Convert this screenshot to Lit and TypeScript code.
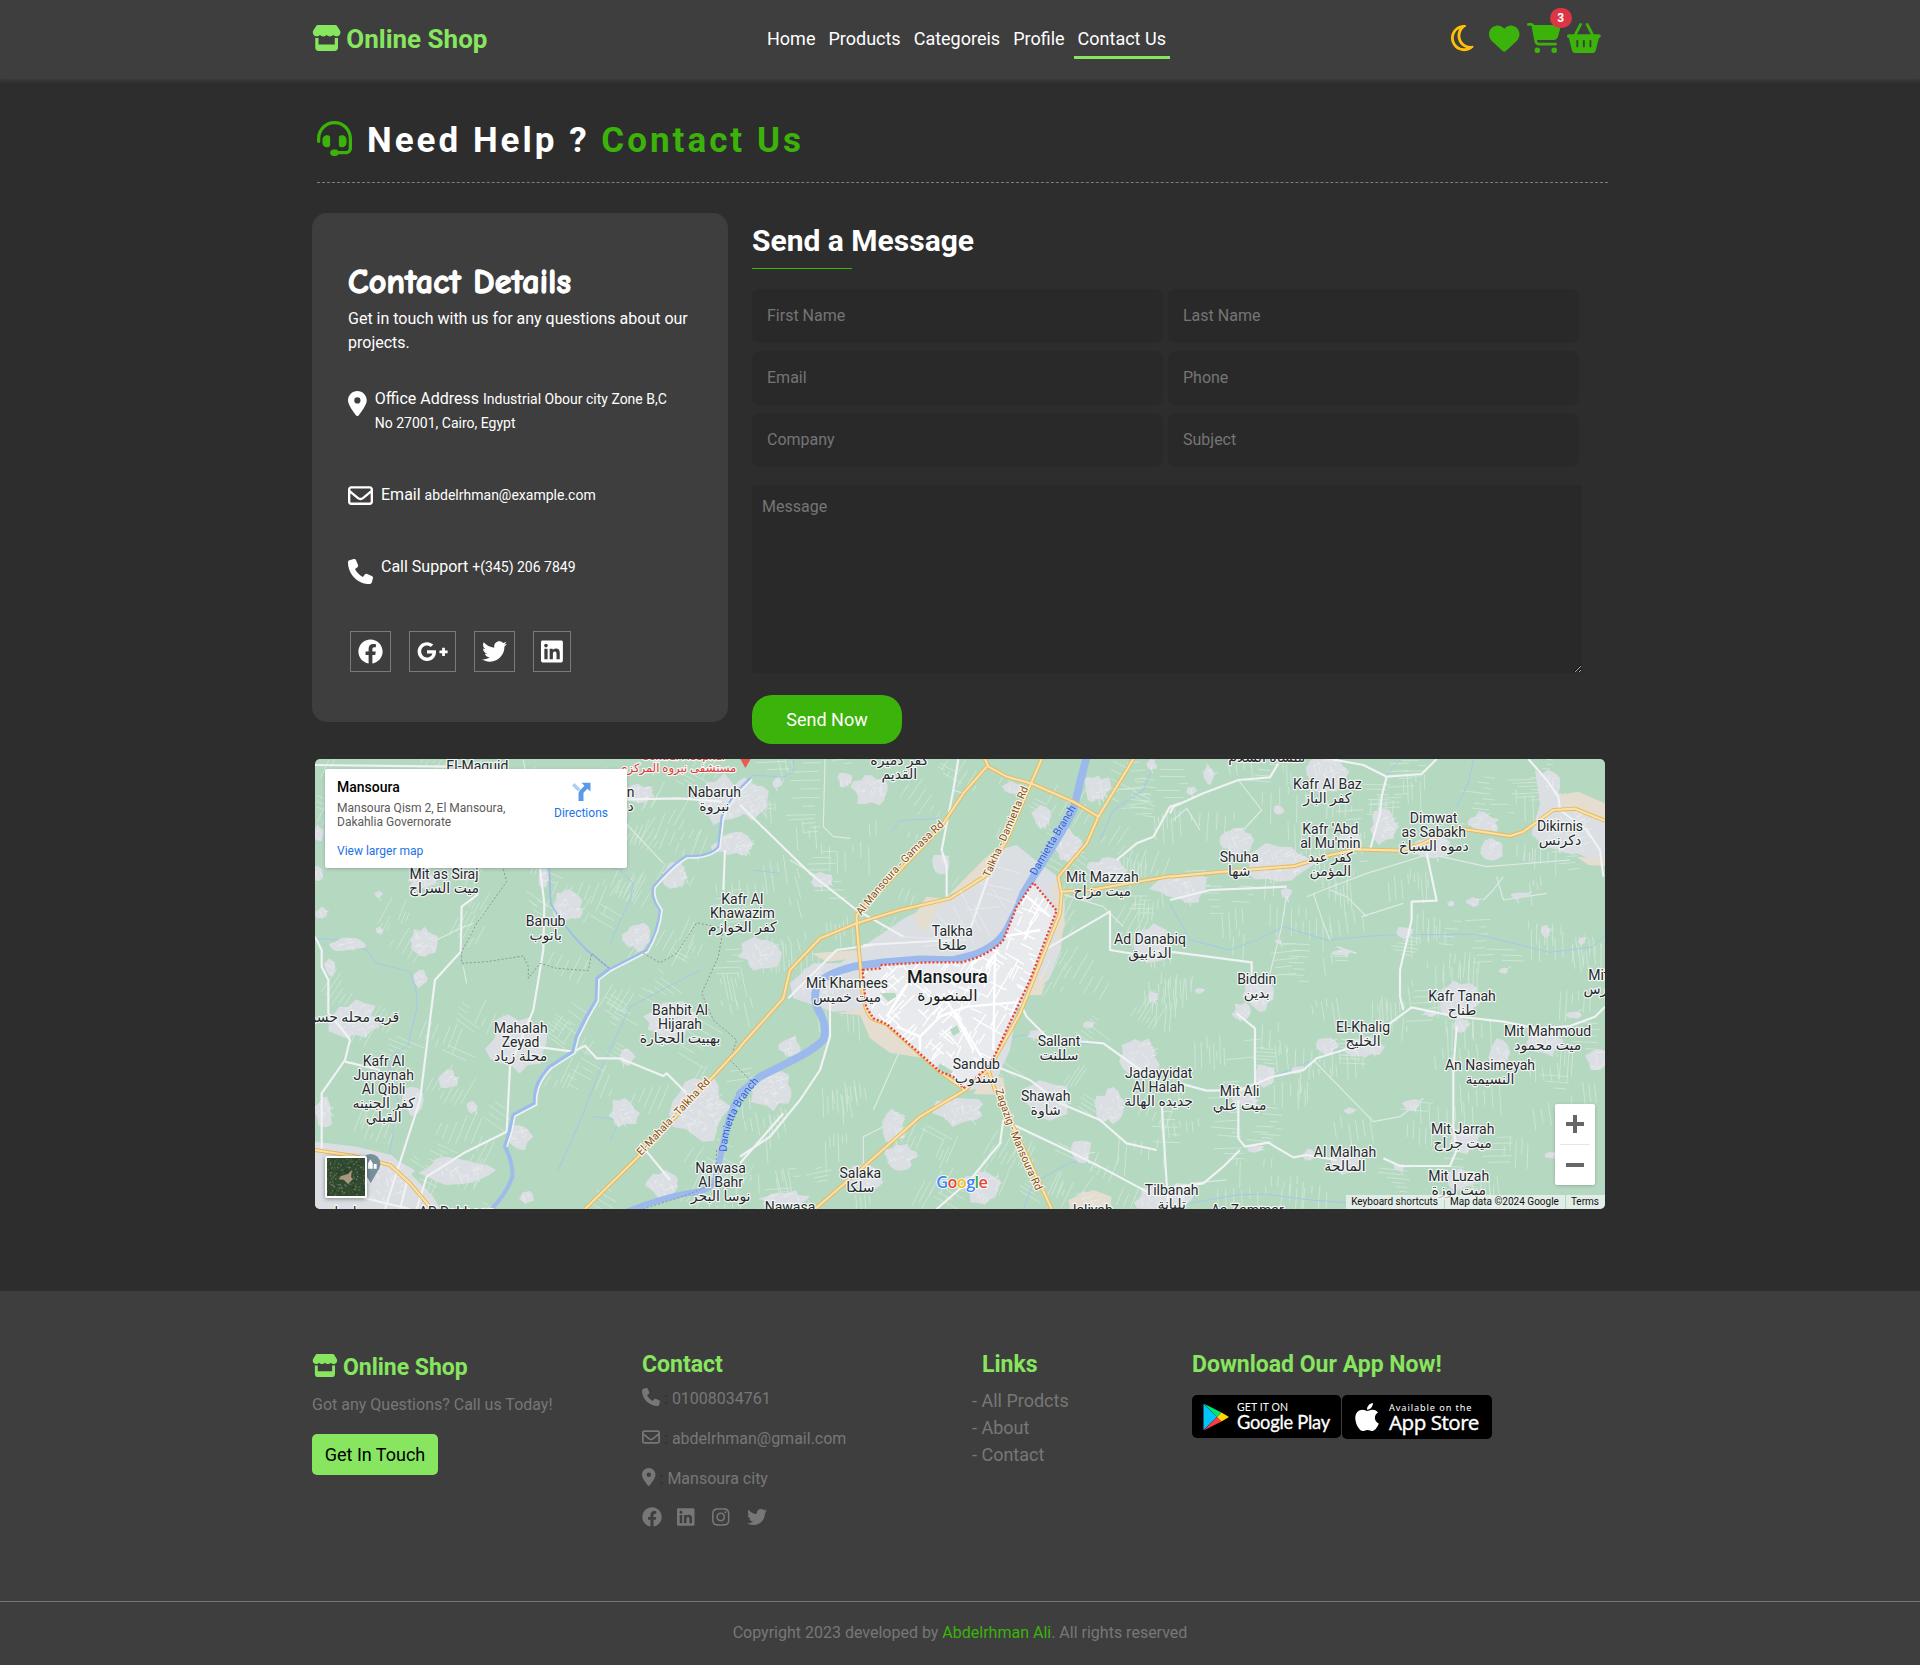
import { LitElement, html, svg, css } from "lit";
import { customElement, property } from "lit/decorators.js";

type Glyph = [number, string];

// Icon outlines on a 512-high grid: [grid width, path].
const ICONS: Record<string, Glyph> = {
  store: [576, "M547.6 103.8L490.3 13.1C485.2 5 476.1 0 466.4 0H109.6C99.9 0 90.8 5 85.7 13.1L28.3 103.8c-29.6 46.8-3.4 111.9 51.9 119.4c4 .5 8.1 .8 12.1 .8c26.1 0 49.3-11.4 65.2-29c15.9 17.6 39.1 29 65.2 29c26.1 0 49.3-11.4 65.2-29c15.9 17.6 39.1 29 65.2 29c26.2 0 49.3-11.4 65.2-29c16 17.6 39.1 29 65.2 29c4.1 0 8.1-.3 12.1-.8c55.5-7.4 81.8-72.5 52.1-119.4zM499.7 254.9l-.1 0c-5.3 .7-10.7 1.1-16.2 1.1c-12.4 0-24.3-1.9-35.4-5.3V384H128V250.6c-11.2 3.5-23.2 5.4-35.6 5.4c-5.5 0-11-.4-16.3-1.1l-.1 0c-4.1-.6-8.1-1.3-12-2.3V384v64c0 35.3 28.7 64 64 64H448c35.3 0 64-28.7 64-64V384 252.6c-4 1-8 1.8-12.3 2.3z"],
  headset: [512, "M256 48C141.1 48 48 141.1 48 256v40c0 13.3-10.7 24-24 24s-24-10.7-24-24V256C0 114.6 114.6 0 256 0S512 114.6 512 256V400.1c0 48.6-39.4 88-88.1 88L313.6 488c-8.3 14.3-23.8 24-41.6 24H240c-26.5 0-48-21.5-48-48s21.5-48 48-48h32c17.8 0 33.3 9.7 41.6 24l110.4 .1c22.1 0 40-17.9 40-40V256c0-114.9-93.1-208-208-208zM144 208h16c17.7 0 32 14.3 32 32V352c0 17.7-14.3 32-32 32H144c-35.3 0-64-28.7-64-64V272c0-35.3 28.7-64 64-64zm224 0c35.3 0 64 28.7 64 64v48c0 35.3-28.7 64-64 64H352c-17.7 0-32-14.3-32-32V240c0-17.7 14.3-32 32-32h16z"],
  moon: [384, "M144.7 98.7c-21 34.1-33.1 74.3-33.1 117.3c0 98 62.8 181.4 150.4 211.7c-12.4 2.8-25.3 4.3-38.6 4.3C126.6 432 48 353.3 48 256c0-68.9 39.4-128.4 96.8-157.3zm62.1-66C91.1 41.2 0 137.9 0 256C0 379.7 100 480 223.5 480c47.8 0 92-15 128.4-40.6c1.9-1.3 3.7-2.7 5.5-4c4.8-3.6 9.4-7.4 13.9-11.4c2.7-2.4 5.3-4.8 7.9-7.3c5-4.9 6.3-12.5 3.1-18.7s-10.1-9.7-17-8.5c-3.7 .6-7.4 1.2-11.1 1.6c-5 .5-10.1 .9-15.3 1c-1.2 0-2.5 0-3.7 0c-.1 0-.2 0-.3 0c-96.8-.2-175.2-78.9-175.2-176c0-54.8 24.9-103.7 64.1-136c1-.9 2.1-1.7 3.2-2.6c4-3.2 8.2-6.2 12.5-9c3.1-2 6.3-4 9.6-5.8c6.1-3.5 9.2-10.5 7.7-17.3s-7.3-11.9-14.3-12.5c-3.6-.3-7.1-.5-10.7-.6c-2.7-.1-5.5-.1-8.2-.1c-3.3 0-6.5 .1-9.8 .2c-2.3 .1-4.6 .2-6.9 .4z"],
  heart: [512, "M47.6 300.4L228.3 469.1c7.5 7 17.4 10.9 27.7 10.9s20.2-3.9 27.7-10.9L464.4 300.4c30.4-28.3 47.6-68 47.6-109.5v-5.8c0-69.9-50.5-129.5-119.4-141C347 36.5 300.6 51.4 268 84L256 96 244 84c-32.6-32.6-79-47.5-124.6-39.9C50.5 55.6 0 115.2 0 185.1v5.8c0 41.5 17.2 81.2 47.6 109.5z"],
  cart: [576, "M0 24C0 10.7 10.7 0 24 0H69.5c22 0 41.5 12.8 50.6 32h411c26.3 0 45.5 25 38.6 50.4l-41 152.3c-8.5 31.4-37 53.3-69.5 53.3H170.7l5.4 28.5c2.2 11.3 12.1 19.5 23.6 19.5H488c13.3 0 24 10.7 24 24s-10.7 24-24 24H199.7c-34.6 0-64.3-24.6-70.7-58.5L77.4 54.5c-.7-3.8-4-6.5-7.9-6.5H24C10.7 48 0 37.3 0 24zM128 464a48 48 0 1 1 96 0 48 48 0 1 1 -96 0zm336-48a48 48 0 1 1 0 96 48 48 0 1 1 0-96z"],
  basket: [576, "M253.3 35.1c6.1-11.8 1.5-26.3-10.2-32.4s-26.3-1.5-32.4 10.2L117.6 192H32c-17.7 0-32 14.3-32 32s14.3 32 32 32L83.9 463.5C91 492 116.6 512 146 512H430c29.4 0 55-20 62.1-48.5L544 256c17.7 0 32-14.3 32-32s-14.3-32-32-32H458.4L365.3 12.9C359.2 1.2 344.7-3.4 332.9 2.7s-16.3 20.6-10.2 32.4L404.3 192H171.7L253.3 35.1zM192 304v96c0 8.8-7.2 16-16 16s-16-7.2-16-16V304c0-8.8 7.2-16 16-16s16 7.2 16 16zm96-16c8.8 0 16 7.2 16 16v96c0 8.8-7.2 16-16 16s-16-7.2-16-16V304c0-8.8 7.2-16 16-16zm128 16v96c0 8.8-7.2 16-16 16s-16-7.2-16-16V304c0-8.8 7.2-16 16-16s16 7.2 16 16z"],
  pin: [384, "M215.7 499.2C267 435 384 279.4 384 192C384 86 298 0 192 0S0 86 0 192c0 87.4 117 243 168.3 307.2c12.3 15.3 35.1 15.3 47.4 0zM192 128a64 64 0 1 1 0 128 64 64 0 1 1 0-128z"],
  mail: [512, "M64 112c-8.8 0-16 7.2-16 16v22.1L220.5 291.7c20.7 17 50.4 17 71.1 0L464 150.1V128c0-8.8-7.2-16-16-16H64zM48 212.2V384c0 8.8 7.2 16 16 16H448c8.8 0 16-7.2 16-16V212.2L322 328.8c-38.4 31.5-93.7 31.5-132 0L48 212.2zM0 128C0 92.7 28.7 64 64 64H448c35.3 0 64 28.7 64 64V384c0 35.3-28.7 64-64 64H64c-35.3 0-64-28.7-64-64V128z"],
  phone: [512, "M164.9 24.6c-7.7-18.6-28-28.5-47.4-23.2l-88 24C12.1 30.2 0 46 0 64C0 311.4 200.6 512 448 512c18 0 33.8-12.1 38.6-29.5l24-88c5.3-19.4-4.6-39.7-23.2-47.4l-96-40c-16.3-6.8-35.2-2.1-46.3 11.6L304.7 368C234.3 334.7 177.3 277.7 144 207.3L193.3 167c13.7-11.2 18.4-30 11.6-46.3l-40-96z"],
  facebook: [512, "M504 256C504 119 393 8 256 8S8 119 8 256c0 123.78 90.69 226.38 209.25 245V327.69h-63V256h63v-54.64c0-62.15 37-96.48 93.67-96.48 27.14 0 55.52 4.84 55.52 4.84v61h-31.28c-30.8 0-40.41 19.12-40.41 38.73V256h68.78l-11 71.69h-57.78V501C413.31 482.38 504 379.78 504 256z"],
  gplus: [640, "M386.061 228.496c1.834 9.692 3.143 19.384 3.143 31.956C389.204 370.205 315.599 448 204.8 448c-106.084 0-192-85.915-192-192s85.916-192 192-192c51.864 0 95.083 18.859 128.611 50.292l-52.126 50.03c-14.145-13.621-39.028-29.599-76.485-29.599-65.484 0-118.92 54.221-118.92 121.277 0 67.056 53.436 121.277 118.92 121.277 75.961 0 104.513-54.745 108.965-82.773H204.8v-66.009h181.261zm185.406 6.437V179.2h-56.001v55.733h-55.733v56.001h55.733v55.733h56.001v-55.733H627.2v-56.001h-55.733z"],
  twitter: [512, "M459.37 151.716c.325 4.548.325 9.097.325 13.645 0 138.72-105.583 298.558-298.558 298.558-59.452 0-114.68-17.219-161.137-47.106 8.447.974 16.568 1.299 25.34 1.299 49.055 0 94.213-16.568 130.274-44.832-46.132-.975-84.792-31.188-98.112-72.772 6.498.974 12.995 1.624 19.818 1.624 9.421 0 18.843-1.3 27.614-3.573-48.081-9.747-84.143-51.98-84.143-102.985v-1.299c13.969 7.797 30.214 12.67 47.431 13.319-28.264-18.843-46.781-51.005-46.781-87.391 0-19.492 5.197-37.36 14.294-52.954 51.655 63.675 129.3 105.258 216.365 109.807-1.624-7.797-2.599-15.918-2.599-24.04 0-57.828 46.782-104.934 104.934-104.934 30.213 0 57.502 12.67 76.67 33.137 23.715-4.548 46.456-13.32 66.599-25.34-7.798 24.366-24.366 44.833-46.132 57.827 21.117-2.273 41.584-8.122 60.426-16.243-14.292 20.791-32.161 39.308-52.628 54.253z"],
  linkedin: [448, "M416 32H31.9C14.3 32 0 46.5 0 64.3v383.4C0 465.5 14.3 480 31.9 480H416c17.6 0 32-14.5 32-32.3V64.3c0-17.8-14.4-32.3-32-32.3zM135.4 416H69V202.2h66.5V416zm-33.2-243c-21.3 0-38.5-17.3-38.5-38.5S80.9 96 102.2 96c21.2 0 38.5 17.3 38.5 38.5 0 21.3-17.2 38.5-38.5 38.5zm282.1 243h-66.4V312c0-24.8-.5-56.7-34.5-56.7-34.6 0-39.9 27-39.9 54.9V416h-66.4V202.2h63.7v29.2h.9c8.9-16.8 30.6-34.5 62.9-34.5 67.2 0 79.7 44.3 79.7 101.9V416z"],
  instagram: [448, "M224.1 141c-63.6 0-114.9 51.3-114.9 114.9s51.3 114.9 114.9 114.9S339 319.5 339 255.9 287.7 141 224.1 141zm0 189.6c-41.1 0-74.7-33.5-74.7-74.7s33.5-74.7 74.7-74.7 74.7 33.5 74.7 74.7-33.6 74.7-74.7 74.7zm146.4-194.3c0 14.9-12 26.8-26.8 26.8-14.9 0-26.8-12-26.8-26.8s12-26.8 26.8-26.8 26.8 12 26.8 26.8zm76.1 27.2c-1.7-35.9-9.9-67.7-36.2-93.9-26.2-26.2-58-34.4-93.9-36.2-37-2.1-147.9-2.1-184.9 0-35.8 1.7-67.6 9.9-93.9 36.1s-34.4 58-36.2 93.9c-2.1 37-2.1 147.9 0 184.9 1.7 35.9 9.9 67.7 36.2 93.9s58 34.4 93.9 36.2c37 2.1 147.9 2.1 184.9 0 35.9-1.7 67.7-9.9 93.9-36.2 26.2-26.2 34.4-58 36.2-93.9 2.1-37 2.1-147.8 0-184.8zM398.8 388c-7.8 19.6-22.9 34.7-42.6 42.6-29.5 11.7-99.5 9-132.1 9s-102.7 2.6-132.1-9c-19.6-7.8-34.7-22.9-42.6-42.6-11.7-29.5-9-99.5-9-132.1s-2.6-102.7 9-132.1c7.8-19.6 22.9-34.7 42.6-42.6 29.5-11.7 99.5-9 132.1-9s102.7-2.6 132.1 9c19.6 7.8 34.7 22.9 42.6 42.6 11.7 29.5 9 99.5 9 132.1s2.7 102.7-9 132.1z"],
  apple: [384, "M318.7 268.7c-.2-36.7 16.4-64.4 50-84.8-18.8-26.9-47.2-41.7-84.7-44.6-35.5-2.8-74.3 20.7-88.5 20.7-15 0-49.4-19.7-76.4-19.7C63.3 141.2 4 184.8 4 273.5q0 39.3 14.4 81.2c12.8 36.7 59 126.7 107.2 125.2 25.2-.6 43-17.9 75.8-17.9 31.8 0 48.3 17.9 76.4 17.9 48.6-.7 90.4-82.5 102.6-119.3-65.2-30.7-61.7-90-61.7-91.9zm-56.6-164.2c27.3-32.4 24.8-61.9 24-72.5-24.1 1.4-52 16.4-67.9 34.9-17.5 19.8-27.8 44.3-25.6 71.9 26.1 2 49.9-11.4 69.5-34.3z"],
};

@customElement("fa-icon")
export class FaIcon extends LitElement {
  @property() name = "store";
  @property({ type: Number }) size = 25;

  static styles = css`
    :host { display: inline-block; flex: none; }
    .glyph { display: block; fill: currentColor; }
  `;

  render() {
    const [w, d] = ICONS[this.name];
    return html`<svg class="glyph" viewBox="0 0 ${w} 512" width=${(w / 512) * this.size} height=${this.size}><path d=${d} /></svg>`;
  }
}

/* ---------- city map ---------- */

// Map units are a third of a CSS pixel. The map is surveyed in three sheets.
const SHEETS = [0, 1290, 2580];
type Place = [number, number, string[], string?];

const PLACES: Place[][] = [
  [
    [502, 62, ["El-Maquid"]],
    [962, 142, ["n", "د"]],
    [1213, 142, ["Nabaruh", "نبروة"]],
    [402, 388, ["Mit as Siraj", "ميت السراج"]],
    [707, 529, ["Banub", "بانوب"]],
    [1297, 461, ["Kafr Al", "Khawazim", "كفر الخوازم"]],
    [632, 850, ["Mahalah", "Zeyad", "محلة زياد"]],
    [221, 948, ["Kafr Al", "Junaynah", "Al Qibli", "كفر الجنينه", "القبلي"]],
    [128, 816, ["قريه محله حسن"]],
    [1110, 795, ["Bahbit Al", "Hijarah", "بهبيت الحجارة"]],
    [1232, 1270, ["Nawasa", "Al Bahr", "نوسا البحر"]],
    [1120, 30, ["Central Hospital"], "clinic"],
    [1102, 66, ["مستشفى نبروه المركزي"], "clinic"],
    [440, 1402, ["AR Rahbeen"]],
    [115, 1402, ["سامول"]],
  ],
  [
    [478, 45, ["كفر دميرة", "القديم"]],
    [637, 559, ["Talkha", "طلخا"]],
    [622, 700, ["Mansoura"], "city"],
    [622, 753, ["المنصورة"], "city-ar"],
    [321, 714, ["Mit Khamees", "ميت خميس"]],
    [1087, 396, ["Mit Mazzah", "ميت مزاح"]],
    [1230, 583, ["Ad Danabiq", "الدنابيق"]],
    [957, 888, ["Sallant", "سللنت"]],
    [1256, 985, ["Jadayyidat", "Al Halah", "جديده الهالة"]],
    [709, 957, ["Sandub", "سندوب"]],
    [917, 1053, ["Shawah", "شاوة"]],
    [361, 1285, ["Salaka", "سلكا"]],
    [150, 1385, ["Nawasa"]],
    [1052, 1396, ["Jaliyah"]],
    [1295, 1335, ["Tilbanah", "تلبانة"]],
  ],
  [
    [290, 35, ["منشأة السلام"]],
    [472, 118, ["Kafr Al Baz", "كفر الباز"]],
    [481, 252, ["Kafr 'Abd", "al Mu'min", "كفر عبد", "المؤمن"]],
    [791, 219, ["Dimwat", "as Sabakh", "دموه السباخ"]],
    [1170, 243, ["Dikirnis", "دكرنس"]],
    [208, 336, ["Shuha", "شها"]],
    [260, 703, ["Biddin", "بدين"]],
    [876, 753, ["Kafr Tanah", "طناح"]],
    [579, 847, ["El-Khalig", "الخليج"]],
    [1133, 858, ["Mit Mahmoud", "ميت محمود"]],
    [960, 960, ["An Nasimeyah", "النسيمية"]],
    [209, 1039, ["Mit Ali", "ميت علي"]],
    [878, 1152, ["Mit Jarrah", "ميت جراح"]],
    [525, 1221, ["Al Malhah", "المالحة"]],
    [866, 1294, ["Mit Luzah", "ميت لوزة"]],
    [232, 1394, ["As Zammar"]],
    [1336, 690, ["Mit Faris", "ميت فارس"]],
  ],
];

// Village footprints: centre x, centre y, half width, half height.
const VILLAGES: number[][][] = [
  [[980, 130, 60, 30], [1235, 150, 85, 75], [1270, 280, 70, 45], [1095, 375, 45, 40], [770, 470, 50, 50], [980, 560, 45, 45],
   [340, 575, 50, 50], [330, 685, 28, 28], [207, 432, 14, 10], [207, 540, 12, 14], [130, 810, 85, 60], [620, 880, 95, 90], [1080, 810, 85, 60],
   [950, 920, 28, 28], [415, 990, 30, 32], [485, 1070, 18, 22], [940, 1090, 50, 45], [1170, 1070, 90, 110], [630, 1160, 38, 45], [110, 585, 55, 22],
   [440, 1260, 110, 45], [180, 1290, 170, 95], [1060, 1300, 60, 40], [25, 250, 22, 25], [40, 1090, 30, 60], [25, 370, 18, 25], [340, 395, 50, 24], [310, 1050, 40, 50], [700, 385, 20, 30], [650, 1340, 25, 22], [60, 650, 20, 30], [35, 490, 20, 20]],
  [[30, 150, 60, 70], [390, 120, 60, 50], [315, 90, 24, 26], [10, 290, 28, 35], [600, 340, 30, 35], [245, 390, 35, 28], [905, 200, 30, 35], [1070, 115, 45, 45],
   [985, 290, 45, 55], [60, 610, 65, 55], [1100, 360, 60, 45], [1235, 580, 60, 60], [820, 115, 35, 20], [480, 1220, 50, 40], [460, 1130, 40, 60], [660, 1080, 80, 50],
   [920, 1050, 80, 60], [1115, 1070, 50, 60], [1200, 920, 60, 65], [1240, 740, 18, 18], [1045, 825, 20, 12], [1020, 1200, 38, 40], [730, 1310, 60, 55], [370, 1280, 60, 45],
   [150, 890, 38, 35], [95, 1020, 70, 65], [1240, 1350, 60, 45], [130, 1350, 80, 30], [1050, 1350, 60, 25], [1235, 45, 18, 18], [240, 700, 90, 60], [112, 98, 18, 18], [890, 855, 30, 15]],
  [[470, 65, 70, 70], [115, 75, 18, 35], [65, 122, 18, 14], [325, 180, 18, 16], [200, 270, 50, 50], [320, 340, 110, 60], [640, 230, 45, 55], [40, 410, 100, 42], [540, 255, 35, 40],
   [940, 220, 50, 35], [970, 300, 38, 35], [790, 290, 60, 40], [1140, 110, 40, 55], [1200, 240, 110, 75], [1050, 436, 40, 10], [910, 456, 22, 16], [842, 461, 12, 10],
   [705, 548, 28, 20], [1125, 545, 16, 20], [1235, 572, 12, 14], [325, 575, 10, 10], [515, 608, 30, 10], [88, 722, 16, 10], [1000, 662, 14, 10], [265, 730, 50, 55],
   [215, 785, 30, 30], [870, 750, 70, 60], [875, 825, 25, 25], [1210, 795, 25, 12], [1120, 870, 60, 55], [985, 910, 35, 45], [1280, 930, 35, 45], [470, 890, 35, 28],
   [580, 890, 60, 35], [285, 975, 35, 40], [225, 1040, 45, 35], [540, 1082, 18, 10], [725, 1065, 32, 20], [885, 1170, 50, 40], [415, 1215, 20, 18], [530, 1245, 55, 30],
   [255, 1195, 30, 12], [690, 1252, 18, 12], [870, 1290, 45, 35], [30, 1330, 45, 40], [1140, 1215, 20, 12], [380, 960, 25, 12], [350, 430, 18, 16], [60, 450, 30, 12], [780, 790, 20, 12]],
];

const CITY_FABRIC: string[][] = [
  ["M15 1175L140 1190 245 1215 300 1270 370 1340 390 1377H15Z"],
  ["M300 640L390 575 500 500 620 450 740 378 775 300 830 285 885 330 960 385 975 470 962 600 925 690 870 735 830 780 810 900 760 1010 690 1020 560 925 450 905 390 850 365 780 280 785 160 745 150 700 220 640Z"],
  ["M1095 60L1160 110 1170 140 1225 150 1305 190V345L1220 310 1120 290 1085 250 1110 160Z"],
];
const SAND: string[][] = [
  [],
  ["M290 790L370 775 380 800 440 822 555 925 450 908 390 865 360 795Z", "M620 440L735 325 790 285 740 378Z", "M520 500L560 440 625 448 590 480 550 550Z", "M745 965L790 985 797 1035 700 1032Z",
   "M935 395L965 425 975 520 955 600ZM880 700L925 650 905 735 860 735Z", "M985 1350L1060 1320 1115 1340 1110 1377H990Z", "M215 610L350 600 345 625 260 635Z"],
  ["M1165 135L1225 125 1305 160V212L1215 176 1175 165Z", "M1220 320L1305 325V348L1255 345Z"],
];
const STREAMS: string[][] = [
  ["M45 140V310M15 565L90 570 170 600 200 640 300 665Q325 720 320 780 300 850 295 885L235 925 265 1060 235 1230 265 1377", "M850 340L930 360 970 400 960 450 900 580", "M1170 660L960 770 900 900 870 960 820 1090 745 1260", "M900 1170L930 1110 850 1100"],
  ["M0 110L40 75 130 82 160 65V27", "M450 250L480 212 600 205", "M650 800L540 690", "M1245 40L1210 120 1120 180 1080 270", "M800 865L850 855 890 860M1020 880L1090 882 1150 920", "M850 1377L880 1300 950 1260 990 1238 1040 1235", "M120 370L40 360"],
  ["M0 460L60 570 180 600 260 570 340 530 470 570 640 555 920 553 1140 607 1270 590 1305 555", "M30 998L100 1020 210 1022 310 980 430 930 520 895 650 825 725 775", "M0 1370L200 1335 280 1332 420 1350 620 1365", "M650 75L690 30M910 30L895 100 860 170"],
];
const WHITE_ROADS: string[][] = [
  ["M15 560L35 600V650L55 690V790L90 830 120 870 105 930 35 1030V1200", "M505 432L455 470 452 605 375 690 345 930 330 1050 225 1377", "M690 355L703 460 700 600 670 780 600 950 590 1145 460 1210 350 1280 320 1377",
   "M600 880L790 905 825 887 860 925 930 925 1060 978 1070 970 1130 1030", "M990 1180L1080 1290", "M105 935L210 960", "M15 45L420 50", "M950 148L1110 145 1235 155", "M1245 300L1240 420", "M60 1320L300 1377", "M290 1300L270 1377", "M1290 1240L1420 1090"],
  ["M0 165L210 370 350 480 490 560", "M655 27L640 120 605 300 620 350V440", "M370 585L640 570", "M145 745L290 600 400 585", "M745 380L690 540M1320 160L1290 170 1240 260 1190 280 1130 330", "M905 605L1110 485 1110 600 1230 620",
   "M830 740L860 800 920 860 970 870 1090 880 1160 930 1270 1010 1330 1020", "M770 950L870 990 960 1060 1080 1110 1160 1180 1250 1200", "M790 1110L780 1180 690 1290 590 1377", "M790 1110L980 1200 1080 1250 1230 1330", "M270 750L270 860 240 960 180 1050 90 1160 0 1220", "M1265 1060L1285 1377"],
  ["M0 190L10 170 100 130 205 90 300 82 325 40", "M480 27L580 45 650 80 755 72 800 27", "M650 80L635 140 630 190 600 300", "M1075 27L1130 90 1165 140 1170 180 1250 240 1290 300 1300 380", "M770 310L800 452 725 455 725 510 690 660 690 740 700 780",
   "M0 605L245 637 245 680", "M200 790L255 835V1010", "M640 835L725 772 850 798 1000 815 1100 835 1200 828 1275 800 1305 770", "M30 1000L110 1022 210 1020 310 980 400 960 440 925 520 900 600 870", "M860 830L850 960V1130L860 1200 840 1248 690 1248 640 1225", "M205 1050V1165L225 1190 295 1178 370 1222 410 1215 500 1230", "M210 1200L160 1250 100 1300 30 1310", "M0 450L120 420 350 410"],
];
const MINOR_ROADS: string[][] = [
  ["M460 650L470 700M640 30L665 150M735 60L740 355M910 180L1060 340", "M360 580L440 540 490 520"],
  ["M255 27L250 230 280 260 330 265M150 330L250 390M640 120L670 130M480 900L400 1080M370 1240V1160L490 1100", "M960 430L1090 470 1150 530"],
  ["M600 300L770 310 950 350 1200 330M410 440L460 420 590 370 770 315", "M205 90L275 180 220 240M10 210L50 175 90 240", "M350 430L335 530 300 670M430 430L460 520 480 570M480 420L530 440 590 500", "M430 930L610 1115 690 1100 760 1045M1000 380L970 420 940 450M980 380L1000 450 1130 430M500 590L560 610M60 1300L170 1290", "M575 500L700 460"],
];
const HIGHWAYS: string[][] = [
  ["M15 1200L130 1218 240 1245 300 1300 365 1377", "M825 1377L990 1215 1190 1000 1292 890"],
  ["M0 890L130 745 150 660 240 565 350 520 480 480 630 445 740 375 800 270 873 100 905 27", "M735 27L745 50 800 80 873 100 1000 155 1075 200", "M350 520V495L600 235 670 130 740 50", "M1180 27L1075 200 1040 280 955 380 965 430 960 490 900 640 840 790 790 880 745 960 675 1020 540 1100 360 1260 225 1377",
   "M350 520L368 730Q375 790 400 808L440 822 600 965 675 1020", "M745 960L765 1020 820 1130 935 1377", "M965 425L1050 420 1292 378"],
  ["M0 380L160 365 375 348 480 315 560 298 690 302 760 280 850 235 900 240 1020 258 1060 245 1150 180 1215 176 1305 212"],
];
const BORDERS: string[][] = [
  ["M580 358L590 395 500 520 455 605 455 640 530 635 640 618 655 650 655 685 690 640 740 655 835 662 845 610 900 657", "M1000 610L1050 638 1100 610 1160 518 1240 535 1225 620 1175 730 1210 810 1280 870 1260 930 1330 1000", "M1220 1200L1215 1300 1130 1335 1000 1377"],
  [], [],
];

function seeded(seed: number) {
  let s = seed;
  return () => {
    s = (s * 1664525 + 1013904223) >>> 0;
    return s / 4294967296;
  };
}

// Irrigation strips: bundles of short parallel strokes.
function fieldLines(): string {
  const r = seeded(77);
  let d = "";
  for (let i = 0; i < 360; i++) {
    const cx = 15 + r() * 3870;
    const cy = 27 + r() * 1350;
    const east = cx > 2500;
    const base = east ? 88 : cx > 1290 && cx < 1700 ? 82 : -62;
    const a = ((base + (r() - 0.5) * 14 + (r() > 0.72 ? 92 : 0)) * Math.PI) / 180;
    const n = 2 + Math.floor(r() * 6);
    const gap = 10 + r() * 16;
    for (let k = 0; k < n; k++) {
      const len = 18 + r() * 75;
      const shift = (r() - 0.5) * 30;
      const x = cx - Math.sin(a) * gap * k + Math.cos(a) * shift;
      const y = cy + Math.cos(a) * gap * k + Math.sin(a) * shift;
      d += `M${x.toFixed(0)} ${y.toFixed(0)}l${(Math.cos(a) * len).toFixed(0)} ${(Math.sin(a) * len).toFixed(0)}`;
    }
  }
  return d;
}

function blob([cx, cy, rx, ry]: number[], seed: number): string {
  const r = seeded(seed * 97 + 5);
  const n = rx > 40 ? 17 : 11;
  let d = "";
  for (let i = 0; i < n; i++) {
    const a = (i / n) * Math.PI * 2;
    const k = 0.66 + r() * 0.42;
    d += `${i ? "L" : "M"}${(cx + Math.cos(a) * rx * k).toFixed(0)} ${(cy + Math.sin(a) * ry * k).toFixed(0)}`;
  }
  return d + "Z";
}

function lanes([cx, cy, rx, ry]: number[], seed: number): string {
  const r = seeded(seed * 31 + 9);
  const count = Math.round((rx * ry) / 170);
  let d = "";
  for (let i = 0; i < count; i++) {
    const t = r() * Math.PI * 2;
    const q = Math.sqrt(r()) * 0.7;
    const a = (r() > 0.5 ? 1.2 : -0.35) + (r() - 0.5) * 0.5;
    const len = 8 + r() * 16;
    d += `M${(cx + Math.cos(t) * rx * q).toFixed(0)} ${(cy + Math.sin(t) * ry * q).toFixed(0)}l${(Math.cos(a) * len).toFixed(0)} ${(Math.sin(a) * len).toFixed(0)}`;
  }
  return d;
}

function speckles(): { x: number; y: number; c: string }[] {
  const r = seeded(12);
  const tones = ["#1f3a26", "#47603f", "#5d6f55", "#2c4d30", "#738067"];
  return Array.from({ length: 230 }, () => ({ x: r() * 37, y: r() * 37, c: tones[Math.floor(r() * 5)] }));
}

@customElement("city-map")
export class CityMap extends LitElement {
  static styles = css`
    :host { display: block; position: relative; width: 1290px; height: 450px; border-radius: 5px; overflow: hidden; font-family: Roboto, "Liberation Sans", sans-serif; }
    .canvas { display: block; width: 1290px; height: 450px; background: #b5d8c1; }
    .canvas path { fill: none; stroke-linejoin: round; }
    .field { stroke: #d3e9db; stroke-width: 2.4; }
    .canvas .urban { fill: #dbdfe3; }
    .canvas .sand { fill: #e5ddd0; }
    .lane { stroke: #e9edef; stroke-width: 2.2; }
    .stream { stroke: #a5c8ea; stroke-width: 3; }
    .minor { stroke: #dfeae6; stroke-width: 3.5; }
    .road { stroke: #f0f2f4; stroke-width: 6.5; }
    .canal { stroke: #9dbcec; stroke-width: 12; }
    .canal.upper { stroke-width: 7; }
    .canal.slim { stroke-width: 5; }
    .canal-side { stroke: #eef2f4; stroke-width: 5; }
    .river { stroke: #9bb9ec; stroke-width: 23; stroke-linecap: round; }
    .river.low { stroke-width: 18; }
    .hw { stroke: #ebb753; stroke-width: 12; }
    .hw-in { stroke: #f6e2b0; stroke-width: 6.5; }
    .border { stroke: #8d9699; stroke-width: 3; stroke-dasharray: 6 6; }
    .canvas .district { fill: #e8eaee; }
    .avenue { stroke: #ffffff; stroke-width: 7; }
    .block { stroke: #ffffff; stroke-width: 4; }
    .canvas .park { fill: #b5d8c1; }
    .limit { stroke: #ea4335; stroke-width: 7; stroke-dasharray: 6 6; }
    .label { font-size: 42px; fill: #26292d; text-anchor: middle; stroke: #f4f7f6; stroke-width: 7px; paint-order: stroke; stroke-linejoin: round; font-family: Roboto, "DejaVu Sans", sans-serif; }
    .label.city { font-size: 54px; font-weight: 500; fill: #17191b; }
    .label.city-ar { font-size: 47px; fill: #17191b; }
    .label.clinic { font-size: 35px; fill: #d93a33; }
    .route { font-size: 32px; fill: #85501a; stroke: #fbf6e8; stroke-width: 7px; paint-order: stroke; stroke-linejoin: round; }
    .route.water { fill: #2c5fd0; stroke: #b5cdf2; stroke-width: 3px; }
    .logo { font-size: 49px; font-weight: 600; font-family: "Open Sans", Lato, sans-serif; stroke: #ffffff; stroke-width: 5px; paint-order: stroke; letter-spacing: -2px; }
    .canvas .poi { fill: #78909c; }
    .canvas .poi-in { fill: #ffffff; }
    .canvas .marker { fill: #ea5a4f; }

    .info { position: absolute; left: 10px; top: 10px; width: 302px; height: 99px; box-sizing: border-box; padding: 10px 12px; display: flex; justify-content: space-between; background: #fff; border-radius: 2px; box-shadow: 0 1px 4px -1px rgba(0,0,0,.3); font-size: 12px; line-height: 14px; color: #5b5b5b; }
    .info-name { font-size: 14px; line-height: 16px; font-weight: 500; color: #000; margin-bottom: 6px; }
    .info-link { color: #1a73e8; margin-top: 15px; }
    .info-dir { width: 68px; display: flex; flex-direction: column; align-items: center; gap: 5px; color: #1a73e8; margin: 3px 0 0; }
    .dir-icon { display: block; }
    .zoom { position: absolute; right: 10px; bottom: 24px; width: 40px; height: 81px; background: #fff; border-radius: 2px; box-shadow: 0 1px 4px -1px rgba(0,0,0,.3); display: flex; flex-direction: column; align-items: center; }
    .zoom-half { height: 40px; display: flex; align-items: center; }
    .zoom-rule { width: 30px; height: 1px; background: #e6e6e6; }
    .thumb { position: absolute; left: 10px; bottom: 11px; width: 38px; height: 38px; border: 2px solid #fff; border-radius: 2px; box-shadow: 0 1px 4px rgba(0,0,0,.4); overflow: hidden; }
    .credits { position: absolute; right: 0; bottom: 0; height: 14px; display: flex; gap: 1px; font-size: 10px; line-height: 14px; color: #111; }
    .credit { background: rgba(245,245,245,.72); padding: 0 6px 0 5px; white-space: nowrap; }
  `;

  private layer(cls: string, data: string[][]) {
    return data.map((paths, i) => svg`<g transform="translate(${SHEETS[i]} 0)">${paths.map((d) => svg`<path class=${cls} d=${d} />`)}</g>`);
  }

  private places() {
    return PLACES.map((list, i) => svg`<g transform="translate(${SHEETS[i]} 0)">${list.map(([x, y, lines, kind]) =>
      lines.map((t, k) => svg`<text class="label ${kind ?? ""}" x=${x} y=${y + k * 42}>${t}</text>`))}</g>`);
  }

  private city() {
    const r = seeded(41);
    let d = "";
    for (let i = 0; i < 330; i++) {
      const x = 380 + r() * 560;
      const y = 420 + r() * 560;
      const a = (x > 650 ? -1.1 : 0.75) + (r() > 0.5 ? 1.57 : 0) + (r() - 0.5) * 0.3;
      const len = 20 + r() * 50;
      d += `M${x.toFixed(0)} ${y.toFixed(0)}l${(Math.cos(a) * len).toFixed(0)} ${(Math.sin(a) * len).toFixed(0)}`;
    }
    const outline = "M368 660L420 655 425 645 560 637 665 637Q750 615 790 570L830 470 880 398 950 482 870 690 765 915 740 955 670 1015 640 980 600 965 440 822 400 805 378 770Z";
    return svg`<g transform="translate(1290 0)">
      <clipPath id="district"><path d=${outline} /></clipPath>
      <path class="district" d=${outline} />
      <g clip-path="url(#district)">
        <path class="block" d=${d} />
        <path class="avenue" d="M765 610L760 900M470 830L540 860 600 800 680 770 850 755M540 860V900M640 780L730 930M510 690L440 800M700 640L790 560 900 540M850 430L930 500M610 730L700 900" />
        <path class="park" d="M420 730L465 728 470 740 445 755ZM630 840L650 825 660 845 640 858ZM600 940L640 965 625 978 590 955Z" />
      </g>
      <path class="lane" d="M560 520l60 60M590 490l70 80M640 470l60 110M480 560l200 10M700 460l50 100M760 420l40 60M720 400l100 20M770 350l70 20M740 430l90 30M550 590l130 -20M880 640l40 -90M900 690l30 -60M680 480l100 -10M250 650l-60 70M200 690l60 40M660 420l60 120" />
      <path class="limit" d=${outline} />
    </g>`;
  }

  render() {
    return html`
      <svg class="canvas" viewBox="15 27 3870 1350">
        <path class="field" d=${fieldLines()} />
        ${this.layer("stream", STREAMS)}
        ${this.layer("minor", MINOR_ROADS)}
        ${this.layer("urban", CITY_FABRIC)}
        ${this.layer("urban", VILLAGES.map((l, i) => l.map((v, k) => blob(v, i * 60 + k))))}
        ${this.layer("sand", SAND)}
        ${this.layer("lane", VILLAGES.map((l, i) => l.map((v, k) => lanes(v, i * 60 + k))))}
        ${this.layer("road", WHITE_ROADS)}
        <path class="canal slim" d="M718 355L722 460Q760 530 830 600L900 657" />
        <path class="canal upper" d="M1320 85Q1260 140 1235 200L1225 290Q1200 320 1130 318 1090 340 1030 410 1020 440 1050 480 1045 540 1010 600L900 657" />
        <path class="canal" d="M900 657L862 685 860 750 830 800 800 860 790 905 720 950Q670 1000 675 1060L610 1095 600 1140 585 1190Q610 1240 607 1280 590 1330 545 1377" />
        <path class="canal-side" d="M1326 88Q1266 143 1241 203L1230 294Q1202 326 1132 324 1094 346 1036 412 1028 440 1056 480 1051 543 1014 605L903 662 867 689 865 752 836 803 806 863 794 910 724 955Q676 1004 680 1064L615 1099 606 1142 591 1190" />
        <g transform="translate(1290 0)">
          <path class="river" d="M1045 0L1022 90 1000 180Q960 260 880 380L850 430 830 480 800 540Q770 590 700 615L640 630 540 628 430 637 340 650Q260 670 235 700 215 740 235 780 265 830 250 870 220 900 150 935L60 980 0 1030" />
          <path class="river low" d="M0 1030Q-35 1090 -50 1180L-75 1290Q-90 1325 -160 1330 -240 1345 -340 1385" />
        </g>
        ${this.layer("border", BORDERS)}
        ${this.layer("hw", HIGHWAYS)}
        ${this.layer("hw-in", HIGHWAYS)}
        ${this.city()}
        <circle class="poi" cx="182" cy="1241" r="29" />
        <path class="poi" d="M155 1253L182 1300 209 1253Z" />
        <path class="poi-in" d="M174 1256V1240L181 1228 188 1240V1256ZM191 1256V1242H200V1256Z" />
        <path class="marker" d="M1291 27H1322L1306 54Z" />
        <g transform="translate(1290 0)">
          <path id="r1" d="M364 497Q478 345 640 202" /><text class="route"><textPath href="#r1">Al Mansoura - Gamasa Rd</textPath></text>
          <path id="r2" d="M748 384Q800 270 880 80" /><text class="route"><textPath href="#r2">Talkha - Damietta Rd</textPath></text>
          <path id="r3" d="M887 378Q960 250 1030 140" /><text class="route water"><textPath href="#r3">Damietta Branch</textPath></text>
          <path id="r4" d="M766 1020Q805 1150 910 1370" /><text class="route"><textPath href="#r4">Zagazig - Mansoura Rd</textPath></text>
        </g>
        <path id="r5" d="M994 1218L1230 966" /><text class="route"><textPath href="#r5">El-Mahala - Talkha Rd</textPath></text>
        <path id="r6" d="M1250 1205Q1252 1090 1360 980" /><text class="route water"><textPath href="#r6">Damietta Branch</textPath></text>
        ${this.places()}
        <text class="logo" x="1879" y="1314"><tspan fill="#4285f4">G</tspan><tspan fill="#ea4335">o</tspan><tspan fill="#fbbc04">o</tspan><tspan fill="#4285f4">g</tspan><tspan fill="#34a853">l</tspan><tspan fill="#ea4335">e</tspan></text>
      </svg>
      <div class="info">
        <div>
          <div class="info-name">Mansoura</div>
          <div>Mansoura Qism 2, El Mansoura,<br />Dakahlia Governorate</div>
          <div class="info-link">View larger map</div>
        </div>
        <div class="info-dir">
          <svg class="dir-icon" width="19" height="19" viewBox="0 0 19 19"><path d="M0 3.500L2.500 1 8.500 7 6 9.500Z" fill="#b0cdf5" /><path d="M6.500 19V12Q6.500 9.800 8 8.300L12.500 3.800 9.500 .8H18.500V9.500L15.500 6.800 11.500 10.800V19Z" fill="#5a9be8" /></svg>
          <span>Directions</span>
        </div>
      </div>
      <div class="zoom">
        <div class="zoom-half"><svg width="18" height="18"><path d="M9 0V18M0 9H18" stroke="#666" stroke-width="4" /></svg></div>
        <div class="zoom-rule"></div>
        <div class="zoom-half"><svg width="18" height="18"><path d="M0 9H18" stroke="#666" stroke-width="4" /></svg></div>
      </div>
      <div class="thumb">
        <svg width="38" height="38"><rect width="38" height="38" fill="#31492f" />${speckles().map((p) => svg`<rect x=${p.x} y=${p.y} width="1.3" height="1.3" fill=${p.c} />`)}<polygon points="14,18 21,16 25,12 24,19 26,21 21,26 17,22 12,21" fill="#a8987c" /></svg>
      </div>
      <div class="credits"><span class="credit">Keyboard shortcuts</span><span class="credit">Map data ©2024 Google</span><span class="credit">Terms</span></div>
    `;
  }
}

/* ---------- page ---------- */

const NAV = ["Home", "Products", "Categoreis", "Profile", "Contact Us"];
const FIELDS = ["First Name", "Last Name", "Email", "Phone", "Company", "Subject"];

@customElement("app-root")
export class AppRoot extends LitElement {
  static styles = css`
    :host { display: block; width: 1920px; height: 1665px; overflow: hidden; background: #2d2d2d; color: #fff; font: 16px/24px Roboto, "Liberation Sans", sans-serif; }
    .wrap { width: 1296px; margin: 0 auto; }
    .top { height: 79px; background: #3e3e3e; box-shadow: 0 2px 4px rgba(66,76,88,.55); position: relative; }
    .bar { display: grid; grid-template-columns: 451px 688px 1fr; }
    .brand { display: flex; gap: 5px; color: #87e55f; font-weight: 700; font-size: 26px; line-height: 30px; padding-top: 24px; white-space: nowrap; }
    .brand fa-icon { margin-top: 1px; }
    .menu { display: flex; gap: 5px; padding-top: 25px; font-size: 18px; line-height: 27px; }
    .item { padding: 0 4px 4px; height: 27px; white-space: nowrap; }
    .item.on { border-bottom: 3px solid #87e55f; }
    .tools { display: flex; padding-top: 23px; color: #3bb30b; }
    .moon { color: #ffc107; margin-right: 15.5px; }
    .heart { margin-right: 7.2px; }
    .cart { position: relative; margin-right: 7px; height: 30px; }
    .badge { position: absolute; left: 23px; top: -15px; width: 22px; height: 20px; border-radius: 10px; background: #dc3545; color: #fff; font-size: 12px; font-weight: 700; line-height: 20px; text-align: center; }

    .title { width: 1291px; margin: 0 0 0 5px; padding-top: 42px; height: 61px; border-bottom: 1px dashed #7d7d7d; display: flex; gap: 15px; color: #3bb30b; font-size: 35px; line-height: 40px; font-weight: 700; letter-spacing: 3px; }
    .title-text { white-space: pre; }
    .white { color: #fff; }

    .main { display: flex; gap: 24px; padding-top: 30px; align-items: flex-start; }
    .card { width: 416px; height: 509px; box-sizing: border-box; padding: 48px 36px 0; background: #3e3e3e; border-radius: 15px; }
    .card-title { margin: 0 0 3px; font: 700 34px/43px "Comic Neue", "Comic Relief", cursive; letter-spacing: .25px; -webkit-text-stroke: 1.3px #fff; white-space: nowrap; }
    .row { display: flex; gap: 8px; }
    .row.address { margin-top: 32px; }
    .row.mail { margin-top: 48px; }
    .row.call { margin-top: 47px; }
    .row.address fa-icon { margin-top: 4px; }
    .row.mail fa-icon { margin-top: 0; }
    .row.call fa-icon { margin-top: 4px; }
    .small { font-size: 14px; }
    .row-text { width: 310px; }
    .social { display: flex; gap: 18px; margin: 47px 0 0 2px; }
    .box { border: 1px solid #7a7a7a; padding: 7px; height: 25px; }

    .form { width: 840px; padding-top: 10px; }
    .form-title { margin: 0; font-size: 30px; line-height: 36px; font-weight: 700; }
    .rule { width: 100px; height: 1px; background: #3bb30b; margin: 9px 0 20px; }
    .grid { display: grid; grid-template-columns: 411px 411px; gap: 8px 5px; }
    .input, .area { box-sizing: border-box; border: 0; outline: 0; background: #292929; font: inherit; color: #fff; }
    .input { height: 54px; border-radius: 8px; padding: 0 15px 2px; }
    .input::placeholder, .area::placeholder { color: #757575; opacity: 1; }
    .area { display: block; width: 830px; height: 188px; margin-top: 18px; padding: 10px; border-radius: 3px; }
    .send { width: 150px; height: 49px; margin-top: 22px; padding: 0; border: 0; border-radius: 20px; background: #3bb30b; color: #fff; font: 18px/27px Roboto, sans-serif; display: block; }
    .map { margin: 15px 0 0 3px; }

    .foot { margin-top: 82px; background: #3e3e3e; height: 374px; color: #777; }
    .cols { display: grid; grid-template-columns: 330px 330px 220px 1fr; height: 310px; box-sizing: border-box; padding-top: 59px; }
    .h { margin: 0; color: #87e55f; font-size: 23px; line-height: 29px; font-weight: 700; white-space: nowrap; }
    .foot .brand { font-size: 23px; line-height: 29px; padding-top: 3px; height: 31px; }
    .ask { margin-top: 9px; }
    .touch { display: block; width: 126px; height: 41px; margin-top: 17px; padding: 0; border: 0; border-radius: 5px; background: #87e55f; color: #000; font: 18px/27px Roboto, sans-serif; }
    .line { display: flex; height: 40px; gap: 4px; }
    .line.first { margin-top: 8px; }
    .line fa-icon { margin-top: 1px; }
    .colon { color: #2d2d2d; }
    .nets { display: flex; gap: 17.5px; margin-top: -.5px; }
    .nets fa-icon:first-child { margin-right: -2.5px; }
    .links { font-size: 18px; line-height: 27px; margin-top: 8px; }
    .links-h { margin-left: 10px; }
    .apps { display: flex; gap: 1px; margin-top: 16px; }
    .app { box-sizing: border-box; width: 149px; height: 43px; border-radius: 5px; background: #000; color: #fff; display: flex; align-items: center; }
    .app.play { padding-left: 11px; gap: 8px; }
    .app.ios { width: 150px; height: 44px; padding-left: 13px; gap: 10px; }
    .app-text { font: 400 18.3px/18px Lato, sans-serif; white-space: nowrap; letter-spacing: -.25px; -webkit-text-stroke: .3px #fff; }
    .over { display: block; font-size: 10.5px; line-height: 9px; letter-spacing: .1px; padding-bottom: 1px; -webkit-text-stroke: 0; }
    .ios .app-text { font: 400 20.5px/19px "Noto Sans", sans-serif; letter-spacing: -.5px; }
    .ios .over { letter-spacing: .9px; font-size: 9.2px; }
    .legal { border-top: 1px solid #777; text-align: center; padding-top: 19px; }
    .author { color: #3bb30b; }
  `;

  render() {
    return html`
      <header class="top">
        <div class="wrap bar">
          <div class="brand"><fa-icon name="store" .size=${26}></fa-icon>Online Shop</div>
          <nav class="menu">${NAV.map((n) => html`<span class="item ${n === "Contact Us" ? "on" : ""}">${n}</span>`)}</nav>
          <div class="tools">
            <fa-icon class="moon" name="moon" .size=${30}></fa-icon>
            <fa-icon class="heart" name="heart" .size=${30.5}></fa-icon>
            <span class="cart"><fa-icon name="cart" .size=${30}></fa-icon><span class="badge">3</span></span>
            <fa-icon name="basket" .size=${30}></fa-icon>
          </div>
        </div>
      </header>

      <div class="wrap">
        <h1 class="title"><fa-icon name="headset" .size=${35}></fa-icon><span class="title-text"><span class="white">Need Help ? </span>Contact Us</span></h1>
        <div class="main">
          <section class="card">
            <h2 class="card-title">Contact Details</h2>
            <div>Get in touch with us for any questions about our projects.</div>
            <div class="row address"><fa-icon name="pin" .size=${25}></fa-icon><div class="row-text">Office Address <span class="small">Industrial Obour city Zone B,C No 27001, Cairo, Egypt</span></div></div>
            <div class="row mail"><fa-icon name="mail" .size=${25}></fa-icon><div class="row-text">Email <span class="small">abdelrhman@example.com</span></div></div>
            <div class="row call"><fa-icon name="phone" .size=${25}></fa-icon><div class="row-text">Call Support <span class="small">+(345) 206 7849</span></div></div>
            <div class="social">${["facebook", "gplus", "twitter", "linkedin"].map((n) => html`<span class="box"><fa-icon name=${n} .size=${25}></fa-icon></span>`)}</div>
          </section>
          <section class="form">
            <h2 class="form-title">Send a Message</h2>
            <div class="rule"></div>
            <div class="grid">${FIELDS.map((f) => html`<input class="input" placeholder=${f} />`)}</div>
            <textarea class="area" placeholder="Message"></textarea>
            <button class="send">Send Now</button>
          </section>
        </div>
        <city-map class="map"></city-map>
      </div>

      <footer class="foot">
        <div class="wrap cols">
          <div>
            <div class="brand"><fa-icon name="store" .size=${23}></fa-icon>Online Shop</div>
            <div class="ask">Got any Questions? Call us Today!</div>
            <button class="touch">Get In Touch</button>
          </div>
          <div>
            <h3 class="h">Contact</h3>
            <div class="line first"><fa-icon name="phone" .size=${18}></fa-icon><span class="colon">:</span><span>01008034761</span></div>
            <div class="line"><fa-icon name="mail" .size=${18}></fa-icon><span class="colon">:</span><span>abdelrhman@gmail.com</span></div>
            <div class="line"><fa-icon name="pin" .size=${18}></fa-icon><span class="colon">:</span><span>Mansoura city</span></div>
            <div class="nets">${["facebook", "linkedin", "instagram", "twitter"].map((n) => html`<fa-icon name=${n} .size=${20}></fa-icon>`)}</div>
          </div>
          <div>
            <h3 class="h links-h">Links</h3>
            <div class="links"><div>- All Prodcts</div><div>- About</div><div>- Contact</div></div>
          </div>
          <div>
            <h3 class="h">Download Our App Now!</h3>
            <div class="apps">
              <div class="app play">
                <svg width="26" height="28" viewBox="0 0 26 28"><path d="M.5 1V27L14 14Z" fill="#00c3ff" /><path d="M.5 .5L18.500 9.500 14 14Z" fill="#00e676" /><path d="M.5 27.500L18.500 18.500 14 14Z" fill="#ff3a44" /><path d="M18.500 9.500L26 14 18.500 18.500 14 14Z" fill="#ffd400" /></svg>
                <div class="app-text"><span class="over">GET IT ON</span>Google Play</div>
              </div>
              <div class="app ios">
                <fa-icon name="apple" .size=${32}></fa-icon>
                <div class="app-text"><span class="over">Available on the</span>App Store</div>
              </div>
            </div>
          </div>
        </div>
        <div class="legal">Copyright 2023 developed by <span class="author">Abdelrhman Ali</span>. All rights reserved</div>
      </footer>
    `;
  }
}
